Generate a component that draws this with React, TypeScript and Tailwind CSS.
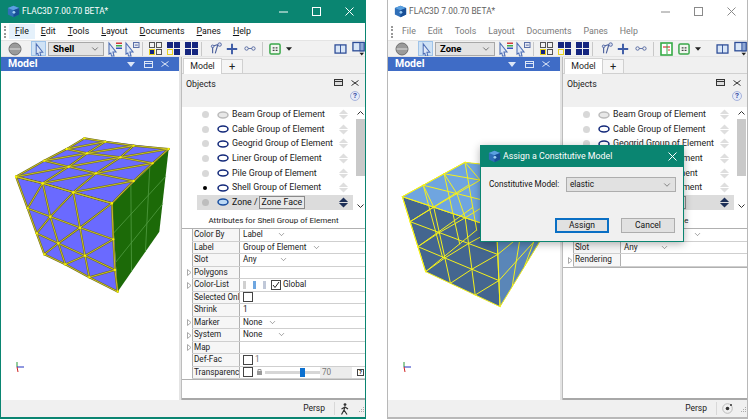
import React from "react";
import { ChevronDown } from "lucide-react";

type P = [number, number];
const FONT = "font-['Roboto','Noto_Sans',sans-serif]";

function Logo() {
  return (
    <svg width="13" height="13" viewBox="0 0 15 15" className="shrink-0">
      <path d="M7.5 1 L14 3.5 V11 L7.5 14 L1 11 V3.5Z" fill="#2f6fb8" />
      <path d="M7.5 1 L14 3.5 L7.5 6 L1 3.5Z" fill="#5aa0e0" />
      <path d="M7.5 6 L14 3.5 V11 L7.5 14Z" fill="#184f96" />
      <circle cx="8" cy="8.5" r="1.6" fill="#9fd0f5" />
    </svg>
  );
}

function Cursor({ x = 0, color = "#4f6fb5" }: { x?: number; color?: string }) {
  return <path d={`M${x + 2} 2 L${x + 9} 11 L${x + 6} 11 L${x + 7} 15 L${x + 4.5} 15 L${x + 3.8} 12 L${x + 2} 13Z`} fill="#dfe8f7" stroke={color} strokeWidth="1.1" />;
}

function PointerBars() {
  return (
    <svg width="16" height="16" viewBox="0 0 16 16" className="shrink-0">
      <Cursor />
      <rect x="9" y="1.5" width="6" height="1.5" fill="#d23a3a" />
      <rect x="9" y="4" width="6" height="1.5" fill="#3fae49" />
      <rect x="9" y="6.5" width="6" height="1.5" fill="#3a54c0" />
    </svg>
  );
}

function PointerBox() {
  return (
    <svg width="16" height="16" viewBox="0 0 16 16" className="shrink-0">
      <Cursor />
      <rect x="9.5" y="1.5" width="5.5" height="5" fill="#e6e9f2" stroke="#5a6fa8" />
      <rect x="10.8" y="3.6" width="3" height="1" fill="#5a6fa8" />
    </svg>
  );
}

function Quad({ variant }: { variant: number }) {
  const cell = (i: number) => {
    if (variant === 3) return "#14257f";
    if (variant === 0) return i === 2 ? "#14257f" : "#f2f2f2";
    return i === 2 ? "#f2f2f2" : "#14257f";
  };
  const stroke = (i: number) => (variant === 3 ? "#14257f" : i === 2 ? "#e6d21f" : variant === 0 ? "#555" : "#14257f");
  const pos: P[] = [[0.5, 0.5], [7.5, 0.5], [0.5, 7.5], [7.5, 7.5]];
  return (
    <svg width="13" height="13" viewBox="0 0 13 13" className="shrink-0">
      {pos.map((p, i) => (
        <rect key={i} x={p[0]} y={p[1]} width="5" height="5" fill={cell(i)} stroke={stroke(i)} />
      ))}
    </svg>
  );
}

function ToolIcons({ extra }: { extra: boolean }) {
  return (
    <>
      <svg width="14" height="15" viewBox="0 0 16 15" className="shrink-0">
        <path d="M3 13 L3 5 M3 5 L9 3 M9 3 L6 13" fill="none" stroke="#4a5f9c" strokeWidth="1.3" />
        <circle cx="11" cy="3" r="2" fill="#d8def0" stroke="#4a5f9c" />
        <circle cx="3" cy="5" r="1.5" fill="#d8def0" stroke="#4a5f9c" />
      </svg>
      <svg width="12" height="12" viewBox="0 0 15 15" className="ml-[2px] shrink-0">
        <path d="M7.5 1V14M1 7.5H14" stroke="#3d5ba6" strokeWidth="2.4" />
      </svg>
      <svg width="12" height="7" viewBox="0 0 14 8" className="ml-[6px] shrink-0">
        <circle cx="3" cy="4" r="2" fill="none" stroke="#4a5f9c" />
        <circle cx="11" cy="4" r="2" fill="none" stroke="#4a5f9c" />
        <path d="M5 4H9" stroke="#4a5f9c" />
      </svg>
      <div className="ml-[6px] mr-[6px] h-[14px] w-px shrink-0 bg-[#c8c8c8]" />
      {extra && (
        <svg width="13" height="14" viewBox="0 0 13 14" className="mr-[5px] shrink-0">
          <rect x="1" y="1" width="11" height="12" fill="#fff" stroke="#35ab45" strokeWidth="1.6" />
          <path d="M3 5H10" stroke="#d33" strokeWidth="1.2" />
          <path d="M7 2V12" stroke="#35ab45" />
          <path d="M8 8H10" stroke="#d33" />
        </svg>
      )}
      <svg width="12" height="12" viewBox="0 0 13 13" className="shrink-0">
        <rect x="1" y="1" width="11" height="11" rx="1.5" fill="#f1f6ef" stroke="#3aa74a" strokeWidth="1.6" />
        <path d="M4 4.5h2v1.5h-2zM7.2 4.5h2v1.5h-2zM4 7.3h2v1.5h-2zM7.2 7.3h2v1.5h-2z" fill="#444" />
      </svg>
      <svg width="6" height="4" viewBox="0 0 7 4" className="ml-[5px] shrink-0">
        <path d="M0 0H7L3.5 4Z" fill="#222" />
      </svg>
      <div className="flex-1" />
      <svg width="13" height="10" viewBox="0 0 14 11" className="shrink-0">
        <rect x="1" y="1" width="12" height="9" fill="#d9e6f7" stroke="#2c4c96" strokeWidth="1.4" />
        <path d="M7 1V10" stroke="#2c4c96" />
      </svg>
      <svg width="13" height="15" viewBox="0 0 14 15" className="ml-[5px] shrink-0">
        <rect x="1" y="1" width="12" height="9" fill="#d9e6f7" stroke="#2c4c96" strokeWidth="1.4" />
        <rect x="8.5" y="1" width="4.5" height="9" fill="#8fa8d6" stroke="#2c4c96" />
        <path d="M8 12H13L10.5 15Z" fill="#222" />
      </svg>
    </>
  );
}

function Toolbar({ mode, extra }: { mode: string; extra: boolean }) {
  return (
    <div className="flex h-[17px] shrink-0 items-center border-y border-[#e4e4e4] bg-[#f1f1f1] pl-[7px]">
      <svg width="14" height="14" viewBox="0 0 14 14" className="shrink-0">
        <circle cx="7" cy="7" r="6" fill="#9a9a9a" stroke="#6e6e6e" />
        <path d="M1.5 7H12.5" stroke="#e0e0e0" />
      </svg>
      <div className="ml-[9px] flex h-[15px] w-[15px] shrink-0 items-center justify-center border border-[#9fc3e8] bg-[#cfe2f5]">
        <svg width="12" height="14" viewBox="0 0 12 15">
          <Cursor x={1} />
        </svg>
      </div>
      <div className={"ml-[2px] flex h-[14px] shrink-0 items-center justify-between border border-[#a8a8a8] bg-[#e3e3e3] pl-[4px] pr-[3px] " + (extra ? "w-[60px]" : "w-[56px]")}>
        <span className="text-[9.5px] font-bold leading-none text-black">{mode}</span>
        <ChevronDown size={10} strokeWidth={1.5} color="#333" />
      </div>
      <div className="ml-[3px] flex gap-[1px]">
        <PointerBars />
        <PointerBox />
      </div>
      <div className="ml-[2px] mr-[6px] h-[14px] w-px shrink-0 bg-[#c8c8c8]" />
      <div className="flex gap-[5px]">
        <Quad variant={0} />
        <Quad variant={1} />
        <Quad variant={3} />
      </div>
      <div className="ml-[3px] mr-[8px] h-[14px] w-px shrink-0 bg-[#c8c8c8]" />
      <ToolIcons extra={extra} />
    </div>
  );
}

function HeaderIcons({ color }: { color: string }) {
  return (
    <div className="flex items-center gap-[8px]">
      <svg width="8" height="5" viewBox="0 0 8 5" className="mr-[1px]">
        <path d="M0 0H8L4 5Z" fill={color} />
      </svg>
      <svg width="9" height="7" viewBox="0 0 9 7">
        <rect x="0.5" y="0.5" width="8" height="6" fill="none" stroke={color} />
        <path d="M1 2.5H8" stroke={color} />
      </svg>
      <svg width="8" height="6" viewBox="0 0 8 6">
        <path d="M0.5 0.5L7.5 5.5M7.5 0.5L0.5 5.5" stroke={color} />
      </svg>
    </div>
  );
}

const GROUPS = ["Beam", "Cable", "Geogrid", "Liner", "Pile", "Shell"];

function Arrows({ dark }: { dark?: boolean }) {
  const c = dark ? "#1d2f57" : "#dedede";
  return (
    <svg width="11" height="13" viewBox="0 0 12 13" className="shrink-0">
      <path d="M1 6H11L6 1Z" fill={c} />
      <path d="M1 7H11L6 12Z" fill={c} />
    </svg>
  );
}

function Eye({ off, solid }: { off?: boolean; solid?: boolean }) {
  return (
    <svg width="12" height="8" viewBox="0 0 12 8" className="shrink-0">
      <ellipse cx="6" cy="4" rx="5" ry="3" fill={off ? "#e8e8e8" : solid ? "#bcd9f5" : "#fff"} stroke={off ? "#bbb" : solid ? "#1a4fa0" : "#13297a"} strokeWidth="1.5" />
    </svg>
  );
}

function ObjectList({ dot }: { dot: boolean }) {
  return (
    <div className="flex h-[108px] shrink-0 pl-[2px]">
      <div className="flex w-[172px] flex-col pl-[13px] pr-[3px] pt-[0.4px]">
        {GROUPS.map((g, i) => (
          <div key={g} className="flex h-[14.6px] items-center pl-[4px] pr-[4px] text-[8.8px] leading-none text-[#222]">
            <div className="flex w-[8px] justify-center">
              <div className={dot && i === 5 ? "h-[4px] w-[4px] rounded-full bg-black" : "h-[7px] w-[7px] rounded-full bg-[#d8d8d8]"} />
            </div>
            <div className="ml-[8px]">
              <Eye off={i === 0} />
            </div>
            <span className="ml-[3px] min-w-0 flex-1 whitespace-nowrap">{g} Group of Element</span>
            <Arrows />
          </div>
        ))}
        <div className="flex h-[14.6px] items-center bg-[#dcdcdc] pl-[4px] pr-[4px] text-[8.8px] leading-none text-[#111]">
          <div className="flex w-[8px] justify-center">
            <div className="h-[7px] w-[7px] rounded-full bg-[#bdbdbd]" />
          </div>
          <div className="ml-[8px]">
            <Eye solid />
          </div>
          <span className="ml-[3px]">Zone /</span>
          <span className="ml-[1px] border border-[#8a8a8a] bg-[#e9e9e9] px-[2px] py-[1px]">Zone Face</span>
          <div className="flex-1" />
          <Arrows dark />
        </div>
      </div>
      <div className="flex w-[9px] flex-col items-center pt-[4px]">
        <svg width="7" height="4" viewBox="0 0 7 4" className="shrink-0">
          <path d="M0.5 3.5L3.5 0.5L6.5 3.5" fill="none" stroke="#333" />
        </svg>
        <div className="mt-[4px] h-[57px] w-full shrink-0 bg-[#c9c9c9]" />
        <div className="flex-1" />
        <svg width="7" height="4" viewBox="0 0 7 4" className="mb-[7px] shrink-0">
          <path d="M0.5 0.5L3.5 3.5L6.5 0.5" fill="none" stroke="#333" />
        </svg>
      </div>
    </div>
  );
}

function Combo({ text, w }: { text: string; w: number }) {
  return (
    <span className="flex items-center">
      <span style={{ width: w }} className="whitespace-nowrap">{text}</span>
      <ChevronDown size={9} strokeWidth={1.3} color="#444" />
    </span>
  );
}

function Check({ checked }: { checked?: boolean }) {
  return (
    <span className="inline-flex h-[10px] w-[10px] shrink-0 items-center justify-center border border-[#444] bg-white">
      {checked && (
        <svg width="8" height="8" viewBox="0 0 8 8">
          <path d="M1 4L3 6.5L7 1" fill="none" stroke="#222" />
        </svg>
      )}
    </span>
  );
}

function Tri() {
  return (
    <svg width="5" height="7" viewBox="0 0 5 7" className="absolute left-[5px]">
      <path d="M0.5 0.5L4 3.5L0.5 6.5Z" fill="#fff" stroke="#aaa" />
    </svg>
  );
}

function PropRow({ name, arrow, children }: { name: string; arrow?: boolean; children?: React.ReactNode }) {
  return (
    <div className="relative flex items-center pl-[10px]">
      {arrow && <Tri />}
      <div className="flex h-[12.5px] min-w-0 flex-1 border-b border-[#cfcfcf] text-[8.2px] leading-[11px] text-[#222]">
        <div className="w-[48px] shrink-0 overflow-hidden whitespace-nowrap border-x border-[#b0b0b0] bg-[#f6f6f6] pl-[1px]">{name}</div>
        <div className="flex min-w-0 flex-1 items-center pl-[3px]">{children}</div>
      </div>
    </div>
  );
}

function AttrsShell() {
  return (
    <>
      <PropRow name="Color By"><Combo text="Label" w={34} /></PropRow>
      <PropRow name="Label"><Combo text="Group of Element" w={69} /></PropRow>
      <PropRow name="Slot"><Combo text="Any" w={36} /></PropRow>
      <PropRow name="Polygons" arrow />
      <PropRow name="Color-List" arrow>
        <span className="flex items-center gap-[7px]">
          <span className="h-[8px] w-[3px] bg-[#d0d0d0]" />
          <span className="h-[8px] w-[3px] bg-[#6ea6e0]" />
          <span className="h-[8px] w-[3px] bg-[#c0c8d8]" />
        </span>
        <span className="ml-[5px] flex items-center gap-[2px]"><Check checked />Global</span>
      </PropRow>
      <PropRow name="Selected Only"><Check /></PropRow>
      <PropRow name="Shrink">1</PropRow>
      <PropRow name="Marker" arrow><Combo text="None" w={25} /></PropRow>
      <PropRow name="System" arrow><Combo text="None" w={34} /></PropRow>
      <PropRow name="Map" arrow />
      <PropRow name="Def-Fac"><Check /><span className="ml-[2px] text-[#777]">1</span></PropRow>
      <PropRow name="Transparency">
        <Check />
        <svg width="7" height="8" viewBox="0 0 7 8" className="ml-[3px] shrink-0">
          <rect x="1" y="3" width="5" height="4" fill="#999" />
          <path d="M2 3V1.5H5V3" fill="none" stroke="#999" />
        </svg>
        <span className="relative ml-[2px] h-[3px] w-[55px] shrink-0 bg-[#d6d6d6]">
          <span className="absolute left-[35px] top-[-3px] h-[9px] w-[5px] bg-[#0b70d0]" />
        </span>
        <span className="w-[32px] shrink-0 bg-[#ececec] pl-[2px] text-[#777]">70</span>
        <span className="ml-[5px] flex h-[7px] w-[7px] shrink-0 items-center justify-center border border-[#444] text-[6px] font-bold leading-none">?</span>
      </PropRow>
    </>
  );
}

function AttrsZone() {
  return (
    <>
      <PropRow name="Label"><Combo text="Zone Face" w={69} /></PropRow>
      <PropRow name="Slot"><Combo text="Any" w={36} /></PropRow>
      <PropRow name="Rendering" arrow />
    </>
  );
}

function RightPane({ dot, zone }: { dot: boolean; zone: boolean }) {
  return (
    <div className="flex min-w-0 flex-1 flex-col bg-white">
      <div className="flex h-[17px] shrink-0 items-end border-b border-[#d0d0d0] bg-[#f0f0f0] pl-[1px]">
        <div className="-mb-px flex h-[16px] w-[39px] items-center justify-center border border-b-0 border-[#d0d0d0] bg-white text-[8.8px] leading-none text-[#222]">Model</div>
        <div className="flex h-[14px] w-[21px] items-center justify-center border-r border-t border-[#d0d0d0] bg-[#f5f5f5] text-[11px] leading-none text-[#222]">+</div>
      </div>
      <div className="flex h-[33px] shrink-0 bg-[#f0f0f0] pl-[4px] pr-[5px] pt-[4px]">
        <span className="flex-1 text-[8.8px] leading-[12px] text-[#222]">Objects</span>
        <div className="flex flex-col items-end gap-[5px]">
          <div className="flex items-center gap-[8px] pr-[1px] pt-[1px]">
            <svg width="9" height="7" viewBox="0 0 9 7">
              <rect x="0.5" y="0.5" width="8" height="6" fill="#ddd" stroke="#333" />
              <path d="M1 2.5H8" stroke="#333" />
            </svg>
            <svg width="8" height="6" viewBox="0 0 8 6">
              <path d="M0.5 0.5L7.5 5.5M7.5 0.5L0.5 5.5" stroke="#333" />
            </svg>
          </div>
          <span className="flex h-[10px] w-[10px] items-center justify-center rounded-full border border-[#a8b4dc] bg-[#e6ebf8] text-[8px] font-bold leading-none text-[#3a4ea0]">?</span>
        </div>
      </div>
      <ObjectList dot={dot} />
      <div className="h-[13px] shrink-0 text-center text-[8px] leading-[11px] text-[#222]">Attributes for {zone ? "Zone" : "Shell Group of Element"}</div>
      <div className="border-t border-[#b0b0b0]">{zone ? <AttrsZone /> : <AttrsShell />}</div>
      <div className="flex-1 border-t border-[#b0b0b0]" />
      <div className="h-[2px] shrink-0 bg-[#a8a8a8]" />
    </div>
  );
}

function lerp(a: P, b: P, t: number): P {
  return [a[0] + (b[0] - a[0]) * t, a[1] + (b[1] - a[1]) * t];
}

function Seg({ a, b, c, w }: { a: P; b: P; c: string; w: number }) {
  return <line x1={a[0]} y1={a[1]} x2={b[0]} y2={b[1]} stroke={c} strokeWidth={w} strokeLinecap="round" />;
}

function ShellCube() {
  const f: P[][] = [
    [[45, 170], [125, 190], [217, 217], [333, 250]],
    [[80, 265], [148, 290], [237, 323], [337, 358]],
    [[107, 340], [172, 370], [252, 407], [342, 450]],
    [[130, 403], [193, 433], [265, 472], [350, 515]],
  ];
  const t: P[][] = [
    [[250, 55], [313, 65], [398, 77], [503, 87]],
    [[197, 87], [258, 100], [358, 112], [455, 130]],
    [[130, 122], [203, 140], [285, 160], [398, 183]],
    [[45, 170], [125, 190], [217, 217], [333, 250]],
  ];
  const segs: [P, P][] = [];
  [f, t].forEach((g) => {
    for (let r = 0; r < 4; r++) for (let c = 0; c < 3; c++) segs.push([g[r][c], g[r][c + 1]]);
    for (let c = 0; c < 4; c++) for (let r = 0; r < 3; r++) segs.push([g[r][c], g[r + 1][c]]);
  });
  for (let r = 0; r < 3; r++) for (let c = 0; c < 3; c++) {
    segs.push([f[r][c + 1], f[r + 1][c]]);
    segs.push([t[r + 1][c], t[r][c + 1]]);
  }
  const B: P = [333, 250], TR: P = [503, 87], C: P = [350, 515], RB: P = [475, 335];
  const green: [P, P][] = [1 / 3, 2 / 3].flatMap((k) => [
    [lerp(B, TR, k), lerp(C, RB, k)] as [P, P],
    [lerp(B, C, k), lerp(TR, RB, k)] as [P, P],
  ]);
  const nodes = [...f.flat(), ...t.flat()];
  return (
    <g transform="translate(0 120) scale(0.3333)">
      <polygon points="45,170 250,55 503,87 333,250 350,515 130,403" fill="#6a6aff" />
      <polygon points="333,250 503,87 475,335 350,515" fill="#1c6a08" />
      {green.map((s, i) => <Seg key={i} a={s[0]} b={s[1]} c="#4f9a40" w={2.5} />)}
      {segs.map((s, i) => <Seg key={i} a={s[0]} b={s[1]} c="#6f6c1a" w={6} />)}
      {segs.map((s, i) => <Seg key={"b" + i} a={s[0]} b={s[1]} c="#cfc726" w={2.8} />)}
      {nodes.map((n, i) => <circle key={i} cx={n[0]} cy={n[1]} r="3.5" fill="#f8f400" />)}
    </g>
  );
}

function ZoneCube() {
  const A: P = [22, 200], Back: P = [210, 97], TR: P = [555, 135], B: P = [305, 295], C: P = [315, 530], D: P = [92, 425], RB: P = [425, 350], H: P = [245, 300];
  const lines: [P, P][] = [];
  const grid = (a: P, b: P, c: P, d: P) => {
    for (let k = 0; k <= 3; k++) {
      lines.push([lerp(a, b, k / 3), lerp(d, c, k / 3)]);
      lines.push([lerp(a, d, k / 3), lerp(b, c, k / 3)]);
    }
  };
  const diag = (a: P, b: P, c: P, d: P) => {
    for (let r = 0; r < 3; r++) for (let k = 0; k < 3; k++) {
      const p = lerp(lerp(a, d, r / 3), lerp(b, c, r / 3), (k + 1) / 3);
      const q = lerp(lerp(a, d, (r + 1) / 3), lerp(b, c, (r + 1) / 3), k / 3);
      lines.push([p, q]);
    }
  };
  grid(A, B, C, D);
  diag(A, B, C, D);
  grid(A, Back, TR, B);
  diag(A, Back, TR, B);
  grid(B, TR, RB, C);
  grid(A, Back, H, D);
  return (
    <g transform="translate(395 130) scale(0.3333)">
      <polygon points="22,200 210,97 555,135 425,350 315,530 92,425" fill="#44668f" />
      <polygon points="305,295 555,135 425,350 315,530" fill="#5a86b8" />
      <polygon points="22,200 210,97 555,135 305,295" fill="#6fa5e0" />
      {lines.map((s, i) => <Seg key={i} a={s[0]} b={s[1]} c="#f5f11a" w={3} />)}
    </g>
  );
}

function Axes({ dx }: { dx: number }) {
  return (
    <g transform={`translate(${dx} 0)`}>
      <path d="M16 362V367" stroke="#2a9a3a" />
      <path d="M16 367L23 367" stroke="#2030c0" />
      <path d="M16 367L17 372" stroke="#d02020" />
    </g>
  );
}

function TitleBar({ active }: { active: boolean }) {
  const c = active ? "#fff" : "#8a8a8a";
  return (
    <div className={"flex h-[23px] shrink-0 items-center pl-[6px] " + (active ? "bg-[#0a8571]" : "bg-white")}>
      <Logo />
      <span className={"ml-[2px] text-[8.4px] leading-none " + (active ? "text-white" : "text-[#5f5f5f]")}>FLAC3D 7.00.70 BETA*</span>
      <div className="flex-1" />
      <div className="flex w-[86px] items-center justify-between pr-[11px]">
        <svg width="9" height="2" viewBox="0 0 9 2"><path d="M0 1H9" stroke={c} /></svg>
        <svg width="9" height="9" viewBox="0 0 9 9"><rect x="0.5" y="0.5" width="8" height="8" fill="none" stroke={c} /></svg>
        <svg width="9" height="9" viewBox="0 0 9 9"><path d="M0.5 0.5L8.5 8.5M8.5 0.5L0.5 8.5" stroke={c} /></svg>
      </div>
    </div>
  );
}

function MenuBar({ active }: { active: boolean }) {
  const items = ["File", "Edit", "Tools", "Layout", "Documents", "Panes", "Help"];
  return (
    <div className={"flex h-[17px] shrink-0 items-center bg-white pl-[3px] text-[8.8px] leading-none " + (active ? "text-[#111]" : "text-[#7a7a7a]")}>
      <div className="mr-[3px] h-[12px] w-[2px] border-l-2 border-dotted border-[#999]" />
      {items.map((m, i) => (
        <span key={m} className={"flex h-[15px] items-center px-[6px] " + (active && i === 0 ? "bg-[#e5f1fb]" : "")}>
          {active ? <span><span className="underline">{m[0]}</span>{m.slice(1)}</span> : m}
        </span>
      ))}
    </div>
  );
}

function StatusBar({ walk }: { walk: boolean }) {
  return (
    <div className="flex h-[17px] shrink-0 items-center justify-end bg-[#f0f0f0] text-[8.5px] leading-none text-[#222]">
      <span>Persp</span>
      <div className="ml-[9px] mr-[5px] h-[13px] w-px bg-[#d8d8d8]" />
      {walk ? (
        <svg width="9" height="12" viewBox="0 0 9 12" className="mr-[9px]">
          <circle cx="5" cy="1.6" r="1.4" fill="#333" />
          <path d="M5 3.5L4 7L1.5 11.5M4 7L7 11.5M5 4L8 6M5 4L1.5 6" fill="none" stroke="#333" strokeWidth="1.2" />
        </svg>
      ) : (
        <svg width="11" height="11" viewBox="0 0 11 11" className="mr-[7px]">
          <circle cx="5.5" cy="5.5" r="4.8" fill="none" stroke="#bbb" />
          <circle cx="5.5" cy="5.5" r="1.8" fill="#333" />
          <circle cx="9" cy="2" r="1" fill="#333" />
        </svg>
      )}
      <svg width="6" height="6" viewBox="0 0 6 6" className="mr-[1px]">
        <path d="M5 1h1v1H5zM3 3h1v1H3zM5 3h1v1H5zM1 5h1v1H1zM3 5h1v1H3zM5 5h1v1H5z" fill="#aaa" />
      </svg>
    </div>
  );
}

function Window({ active, mode, zone, leftW, cube, extra, widthClass }: { active: boolean; mode: string; zone: boolean; leftW: string; cube: React.ReactNode; extra: boolean; widthClass: string }) {
  return (
    <div className={"flex h-[419px] shrink-0 flex-col border-x border-b-2 " + widthClass + " " + (active ? "border-[#0a8571]" : "border-[#b8b8b8]")}>
      <TitleBar active={active} />
      <MenuBar active={active} />
      <Toolbar mode={mode} extra={extra} />
      <div className="flex min-h-0 flex-1 bg-white">
        <div className={"flex shrink-0 flex-col " + leftW}>
          <div className="flex h-[14px] shrink-0 items-center justify-between bg-[#3f6cc6] pl-[7px] pr-[10px]">
            <span className="text-[10.5px] font-bold leading-none text-white">Model</span>
            <HeaderIcons color="#dce6f7" />
          </div>
          <div className="min-h-0 flex-1">{cube}</div>
        </div>
        <div className="w-[3px] shrink-0 border-r border-[#bdbdbd] bg-[#e4e4e4]" />
        <RightPane dot={active} zone={zone} />
      </div>
      <StatusBar walk={active} />
    </div>
  );
}

function Dialog() {
  return (
    <div className="absolute left-[480px] top-[145px] flex h-[97px] w-[204px] flex-col border border-[#0a8571] bg-[#f0f0f0] shadow-[0_2px_8px_rgba(0,0,0,0.3)]">
      <div className="flex h-[21px] shrink-0 items-center bg-[#0a8571] pl-[7px] pr-[6px]">
        <Logo />
        <span className="ml-[2px] flex-1 text-[8.8px] leading-none text-white">Assign a Constitutive Model</span>
        <svg width="9" height="9" viewBox="0 0 9 9"><path d="M0.5 0.5L8.5 8.5M8.5 0.5L0.5 8.5" stroke="#fff" /></svg>
      </div>
      <div className="flex flex-1 flex-col pb-[8px] pl-[8px] pr-[7px] pt-[10px]">
        <div className="flex items-center justify-between text-[8.2px] leading-none text-[#111]">
          <span className="whitespace-nowrap">Constitutive Model:</span>
          <div className="flex h-[15px] w-[110px] items-center justify-between border border-[#adadad] bg-[#e1e1e1] pl-[3px] pr-[3px]">
            <span>elastic</span>
            <ChevronDown size={10} strokeWidth={1.3} color="#333" />
          </div>
        </div>
        <div className="flex-1" />
        <div className="flex justify-end gap-[12px] pr-[1px]">
          <button className="flex h-[15px] w-[54px] items-center justify-center border-2 border-[#0a6fc4] bg-[#e1e1e1] text-[8.5px] leading-none text-[#111]">Assign</button>
          <button className="flex h-[15px] w-[54px] items-center justify-center border border-[#adadad] bg-[#e1e1e1] text-[8.5px] leading-none text-[#111]">Cancel</button>
        </div>
      </div>
    </div>
  );
}

export default function App() {
  return (
    <div className={"relative flex h-[419px] w-[750px] justify-between overflow-hidden bg-white pr-[2px] " + FONT}>
      <Window
        active
        mode="Shell"
        zone={false}
        extra={false}
        leftW="w-[178px]"
        widthClass="w-[366px]"
        cube={
          <svg viewBox="0 71 178 329" className="h-full w-full">
            <ShellCube />
            <Axes dx={0} />
          </svg>
        }
      />
      <Window
        active={false}
        mode="Zone"
        zone
        extra
        leftW="w-[172px]"
        widthClass="w-[361px]"
        cube={
          <svg viewBox="388 71 172 329" className="h-full w-full">
            <ZoneCube />
            <Axes dx={388} />
          </svg>
        }
      />
      <Dialog />
    </div>
  );
}
